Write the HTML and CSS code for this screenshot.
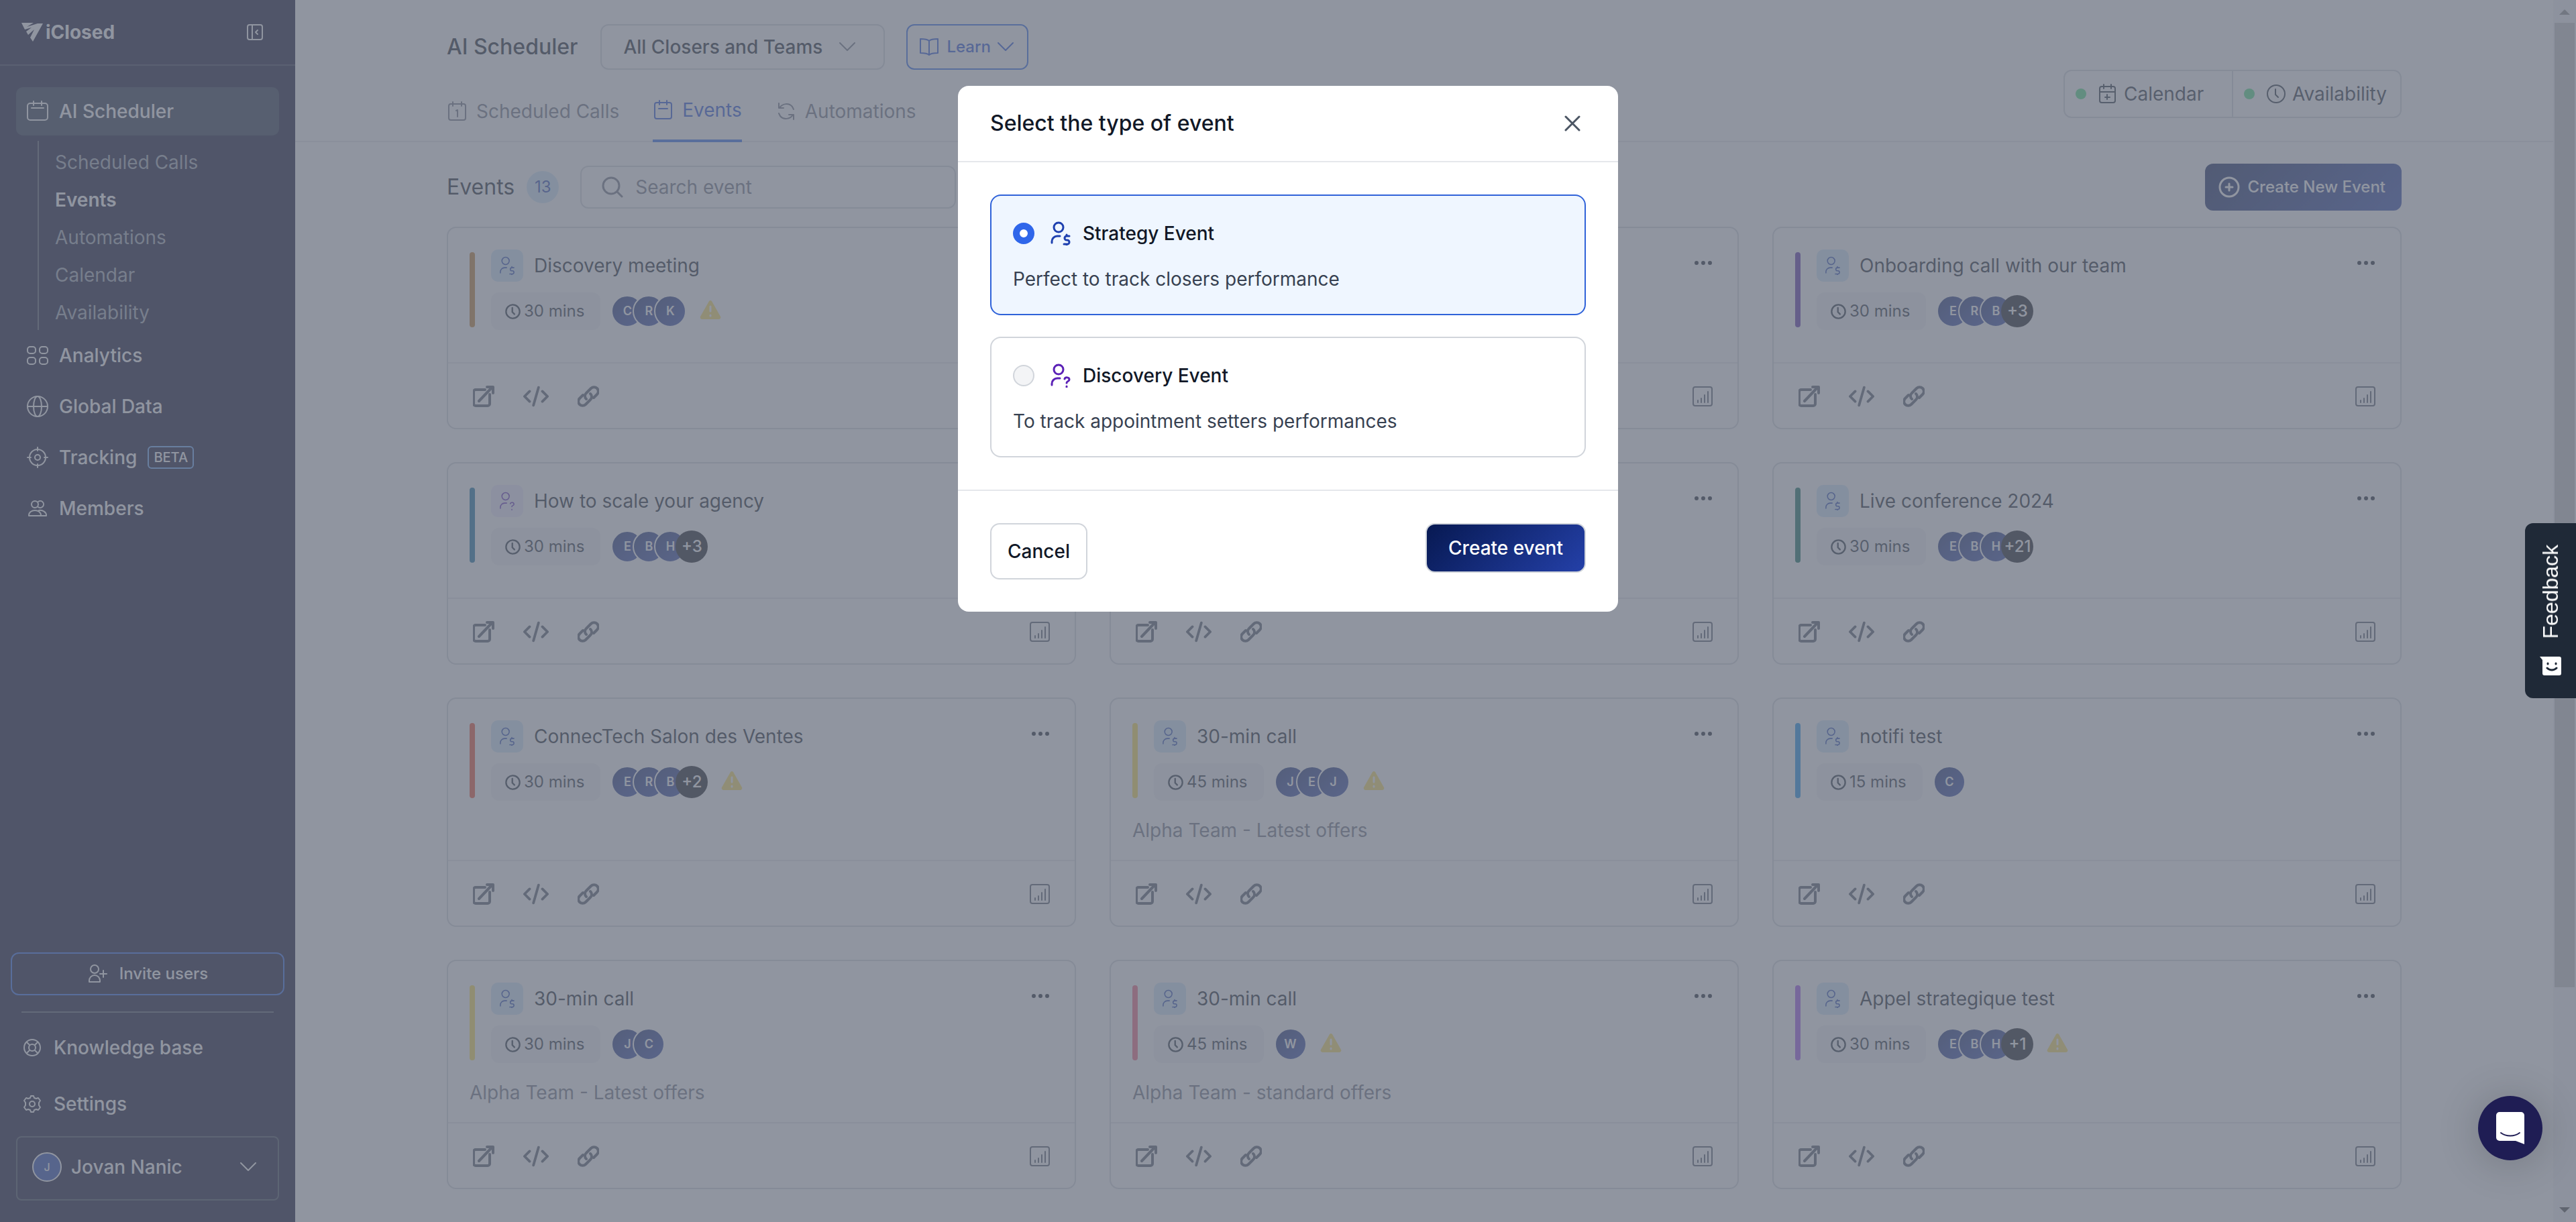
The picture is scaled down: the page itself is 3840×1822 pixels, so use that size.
FILE: index.html
```
<!DOCTYPE html>
<html lang="en">

<head>
    <meta charset="utf-8">
    <meta name="viewport" content="width=device-width, initial-scale=1">
    <title>iClosed - Events</title>
    <link rel="stylesheet" href="styles.css">
</head>

<body>
    <svg class="sprite" aria-hidden="true">
        <symbol id="i-calendar" viewBox="0 0 32 32">
            <rect x="1" y="4" width="30" height="25" rx="4" />
            <path d="M10 1v6M22 1v6M7 11h18" />
        </symbol>
        <symbol id="i-grid" viewBox="0 0 32 32">
            <rect x="1" y="3" width="12" height="10" rx="4" />
            <rect x="19" y="3" width="12" height="10" rx="4" />
            <rect x="1" y="19" width="12" height="10" rx="4" />
            <rect x="19" y="19" width="12" height="10" rx="4" />
        </symbol>
        <symbol id="i-globe" viewBox="0 0 32 32">
            <circle cx="16" cy="16" r="15" />
            <ellipse cx="16" cy="16" rx="6" ry="15" />
            <path d="M1 16h30" />
        </symbol>
        <symbol id="i-target" viewBox="0 0 32 32">
            <circle cx="16" cy="16" r="12" />
            <circle cx="16" cy="16" r="4" />
            <path d="M16 1v5M16 26v5M1 16h5M26 16h5" />
        </symbol>
        <symbol id="i-members" viewBox="0 0 32 32">
            <circle cx="12" cy="10" r="5" />
            <path d="M17 6a5 5 0 1 1 0 8" />
            <path d="M3 27v-1c0-4 4-7 9-7s9 3 9 7v1zM18 19c6-1 11 3 11 7v1h-8" />
        </symbol>
        <symbol id="i-invite" viewBox="0 0 32 32">
            <circle cx="11" cy="9" r="6" />
            <path d="M3 28v-2a8 8 0 0 1 16 0v2zM24 11v10M19 16h10" />
        </symbol>
        <symbol id="i-help" viewBox="0 0 32 32">
            <circle cx="16" cy="16" r="12" />
            <circle cx="16" cy="16" r="5" />
            <path d="M8 8l4 4M24 8l-4 4M8 24l4-4M24 24l-4-4" />
        </symbol>
        <symbol id="i-gear" viewBox="0 0 32 32">
            <circle cx="16" cy="16" r="4" />
            <path d="M14 4h4l1 3 3 1 3-1 3 4-2 3v4l2 3-3 4-3-1-3 1-1 3h-4l-1-3-3-1-3 1-3-4 2-3v-4l-2-3 3-4 3 1 3-1z" />
        </symbol>
        <symbol id="i-collapse" viewBox="0 0 24 24">
            <rect x="1" y="1" width="22" height="22" rx="3" />
            <path d="M8 1v22M16 9l-3 3 3 3" />
        </symbol>
        <symbol id="i-chevron" viewBox="0 0 24 14">
            <path d="M1 1l11 11L23 1" />
        </symbol>
        <symbol id="i-book" viewBox="0 0 32 28">
            <path d="M16 5c-3-3-8-3-13-3v21c5 0 10 0 13 3 3-3 8-3 13-3V2c-5 0-10 0-13 3zM16 5v21" />
        </symbol>
        <symbol id="i-day" viewBox="0 0 32 32">
            <rect x="3" y="5" width="25" height="24" rx="3" />
            <path d="M9 2v6M22 2v6M14 15l2-1v10" />
        </symbol>
        <symbol id="i-event" viewBox="0 0 32 32">
            <rect x="3" y="5" width="25" height="24" rx="3" />
            <path d="M10 2v6M21 2v6M9 14h13" />
        </symbol>
        <symbol id="i-sync" viewBox="0 0 32 32">
            <path d="M5 4v7h7M6 11c4-7 14-8 19-2l2 4M27 28v-7h-7M26 21c-4 7-14 8-19 2l-2-4" />
        </symbol>
        <symbol id="i-caladd" viewBox="0 0 32 32">
            <rect x="4" y="5" width="23" height="24" rx="3" />
            <path d="M10 2v6M21 2v6M4 13h23M15 17v7M12 21h7" />
        </symbol>
        <symbol id="i-clock" viewBox="0 0 32 32">
            <circle cx="16" cy="16" r="13" />
            <path d="M15 9v8l4 4" />
        </symbol>
        <symbol id="i-search" viewBox="0 0 32 32">
            <circle cx="14" cy="14" r="12" />
            <path d="M23 23l7 7" />
        </symbol>
        <symbol id="i-plus" viewBox="0 0 32 32">
            <circle cx="16" cy="16" r="14" />
            <path d="M16 11v10M11 16h10" />
        </symbol>
        <symbol id="i-strategy" viewBox="0 0 30 36">
            <circle cx="12" cy="9" r="7" />
            <path d="M2 32v-2a8 8 0 0 1 8-8h4M28 22h-4a3 3 0 0 0 0 6h1a3 3 0 0 1 0 6h-5M24 20v2M24 34v2" />
        </symbol>
        <symbol id="i-discovery" viewBox="0 0 30 36">
            <circle cx="12" cy="9" r="7" />
            <path d="M2 32v-2a8 8 0 0 1 8-8h4M21 23c1-3 7-3 7 1 0 3-4 2-4 5M24 34v1" />
        </symbol>
        <symbol id="i-open" viewBox="0 0 32 32">
            <path d="M18 6H4a3 3 0 0 0-3 3v18a3 3 0 0 0 3 3h18a3 3 0 0 0 3-3V13M9 23L28 3M21 2h9v9" />
        </symbol>
        <symbol id="i-code" viewBox="0 0 40 32">
            <path d="M10 8l-8 8 8 8M30 8l8 8-8 8M24 2l-8 28" />
        </symbol>
        <symbol id="i-link" viewBox="0 0 32 32">
            <path d="M13 20a6 6 0 0 1 0-9l7-7a6 6 0 0 1 9 9l-5 5M19 12a6 6 0 0 1 0 9l-7 7a6 6 0 0 1-9-9l5-5" />
        </symbol>
        <symbol id="i-chart" viewBox="0 0 30 30">
            <rect x="1" y="1" width="28" height="28" rx="3" />
            <path d="M8 21v3M13 18v6M18 13v11M23 8v16" />
        </symbol>
        <symbol id="i-warning" viewBox="0 0 32 30">
            <path class="tri" d="M14 2a3 3 0 0 1 4 0l13 23a3 3 0 0 1-2 4H3a3 3 0 0 1-2-4z" />
            <path class="mark" d="M16 10v7M16 23v1" />
        </symbol>
        <symbol id="i-dots" viewBox="0 0 26 6">
            <circle cx="3" cy="3" r="2" />
            <circle cx="13" cy="3" r="2" />
            <circle cx="23" cy="3" r="2" />
        </symbol>
    </svg>

    <div class="app">
        <aside class="sidebar">
            <div class="brand">
                <div class="logo">
                    <svg width="32" height="28" viewBox="0 0 32 28">
                        <path fill="currentColor" d="M0 0h18L8 6l16-5h8L17 28l-4-6 6-12-9 8-3-5 8-6-10 3z" />
                    </svg>
                    <span>iClosed</span>
                </div>
                <button class="plain" aria-label="Collapse menu"><svg class="icon collapse"><use href="#i-collapse" /></svg></button>
            </div>
            <nav class="nav">
                <a class="nav-item active" href="#"><svg class="icon"><use href="#i-calendar" /></svg>AI Scheduler</a>
                <div class="subnav">
                    <a href="#">Scheduled Calls</a>
                    <a class="current" href="#">Events</a>
                    <a href="#">Automations</a>
                    <a href="#">Calendar</a>
                    <a href="#">Availability</a>
                </div>
                <a class="nav-item" href="#"><svg class="icon"><use href="#i-grid" /></svg>Analytics</a>
                <a class="nav-item" href="#"><svg class="icon"><use href="#i-globe" /></svg>Global Data</a>
                <a class="nav-item" href="#"><svg class="icon"><use href="#i-target" /></svg>Tracking <span class="beta">BETA</span></a>
                <a class="nav-item" href="#"><svg class="icon"><use href="#i-members" /></svg>Members</a>
            </nav>
            <div class="side-bottom">
                <button class="invite"><svg class="icon"><use href="#i-invite" /></svg>Invite users</button>
                <hr>
                <a class="side-link" href="#"><svg class="icon"><use href="#i-help" /></svg>Knowledge base</a>
                <a class="side-link" href="#"><svg class="icon"><use href="#i-gear" /></svg>Settings</a>
                <button class="user">
                    <span class="user-pic">J</span>
                    <span class="user-name">Jovan Nanic</span>
                    <svg class="icon chevron"><use href="#i-chevron" /></svg>
                </button>
            </div>
        </aside>

        <main class="main">
            <header class="header">
                <div>
                    <div class="header-row">
                        <h1>AI Scheduler</h1>
                        <div class="select-wrap">
                            <select aria-label="Closers and teams">
                                <option>All Closers and Teams</option>
                            </select>
                            <svg class="icon chevron"><use href="#i-chevron" /></svg>
                        </div>
                        <button class="learn"><svg class="icon book"><use href="#i-book" /></svg>Learn<svg class="icon chevron"><use href="#i-chevron" /></svg></button>
                    </div>
                    <nav class="tabs">
                        <a href="#"><svg class="icon"><use href="#i-day" /></svg>Scheduled Calls</a>
                        <a class="active" href="#"><svg class="icon"><use href="#i-event" /></svg>Events</a>
                        <a href="#"><svg class="icon"><use href="#i-sync" /></svg>Automations</a>
                    </nav>
                </div>
                <div class="status">
                    <button><i class="dot"></i><svg class="icon"><use href="#i-caladd" /></svg>Calendar</button>
                    <button><i class="dot"></i><svg class="icon"><use href="#i-clock" /></svg>Availability</button>
                </div>
            </header>

            <section class="content">
                <div class="toolbar">
                    <h2>Events</h2>
                    <span class="count">13</span>
                    <label class="search">
                        <svg class="icon"><use href="#i-search" /></svg>
                        <input type="text" placeholder="Search event" aria-label="Search event">
                    </label>
                    <button class="create-new"><svg class="icon"><use href="#i-plus" /></svg>Create New Event</button>
                </div>
                <div class="cards" id="cards"></div>
            </section>
        </main>

        <div class="scrollbar">
            <svg width="16" height="8" viewBox="0 0 16 8"><path d="M8 0l8 8H0z" /></svg>
            <div class="track"><div class="thumb"></div></div>
            <svg class="down" width="16" height="8" viewBox="0 0 16 8"><path d="M8 8L0 0h16z" /></svg>
        </div>
    </div>

    <div class="overlay">
        <form class="modal" role="dialog" aria-labelledby="modalTitle" onsubmit="return false">
            <div class="modal-head">
                <h2 id="modalTitle">Select the type of event</h2>
                <button type="button" class="plain" aria-label="Close">
                    <svg width="24" height="24" viewBox="0 0 24 24"><path d="M2 2l20 20M22 2L2 22" /></svg>
                </button>
            </div>
            <div class="modal-body">
                <label class="option">
                    <span class="option-row">
                        <input type="radio" name="eventType" checked>
                        <svg class="icon type strategy"><use href="#i-strategy" /></svg>
                        <b>Strategy Event</b>
                    </span>
                    <span class="option-text">Perfect to track closers performance</span>
                </label>
                <label class="option">
                    <span class="option-row">
                        <input type="radio" name="eventType">
                        <svg class="icon type discovery"><use href="#i-discovery" /></svg>
                        <b>Discovery Event</b>
                    </span>
                    <span class="option-text">To track appointment setters performances</span>
                </label>
            </div>
            <div class="modal-foot">
                <button type="button" class="cancel">Cancel</button>
                <button type="submit" class="create">Create event</button>
            </div>
        </form>
    </div>

    <button class="feedback">
        <svg width="32" height="28" viewBox="0 0 32 28">
            <path fill="#fff" d="M0 0h29a3 3 0 0 1 3 3v22a3 3 0 0 1-3 3H7a3 3 0 0 1-3-3V5z" />
            <path fill="none" stroke="#1f2937" stroke-width="3" stroke-linecap="round" d="M12 10v1M24 10v1M11 17c4 4 10 4 14 0" />
        </svg>
        <span>Feedback</span>
    </button>

    <button class="chat" aria-label="Open chat">
        <svg width="42" height="48" viewBox="0 0 42 48">
            <path fill="#fff" d="M5 0h32a5 5 0 0 1 5 5v43l-13-5H5a5 5 0 0 1-5-5V5a5 5 0 0 1 5-5z" />
            <path fill="none" stroke="#1f1d54" stroke-width="2" stroke-linecap="round" d="M7 31c8 6 20 6 28 0" />
        </svg>
    </button>

    <script src="script.js"></script>
</body>

</html>
```
FILE: styles.css
```
* {
    box-sizing: border-box;
}

body {
    margin: 0;
    font-family: Inter, "Liberation Sans", sans-serif;
    font-size: 28px;
    line-height: 40px;
    color: #111827;
    background-color: white;
}

button,
select,
input {
    font: inherit;
    color: inherit;
    margin: 0;
}

button {
    cursor: pointer;
}

a {
    color: inherit;
    text-decoration: none;
}

h1,
h2 {
    margin: 0;
    font-size: 32px;
    font-weight: 500;
}

.sprite {
    display: none;
}

.icon {
    flex: none;
    width: 32px;
    height: 32px;
    fill: none;
    stroke: currentColor;
    stroke-width: 2;
    stroke-linecap: round;
    stroke-linejoin: round;
}

.chevron {
    width: 24px;
    height: 14px;
}

.plain {
    display: flex;
    padding: 0;
    border: none;
    background: none;
}

.app {
    display: flex;
    height: 100vh;
    overflow: hidden;
}

/* Sidebar */
.sidebar {
    display: flex;
    flex-direction: column;
    flex: none;
    width: 440px;
    background-color: #000024;
    color: white;
    font-weight: 500;
}

.brand {
    display: flex;
    align-items: center;
    justify-content: space-between;
    height: 98px;
    padding: 0 48px 0 32px;
    border-bottom: 2px solid #2b2f4a;
}

.logo {
    display: flex;
    align-items: center;
    gap: 4px;
    font-weight: 700;
}

.collapse {
    width: 24px;
    height: 24px;
}

.nav {
    display: flex;
    flex-direction: column;
    gap: 4px;
    padding: 32px 24px;
}

.nav-item {
    display: flex;
    align-items: center;
    gap: 16px;
    height: 72px;
    padding: 0 16px;
    border-radius: 10px;
}

.nav-item.active {
    background-color: #1f2942;
}

.subnav {
    display: flex;
    flex-direction: column;
    gap: 4px;
    margin: 4px 0 -2px 32px;
    padding: 6px 0 0 24px;
    border-left: 2px solid #4b5563;
    color: #9ca3af;
    font-weight: 400;
}

.subnav a {
    line-height: 52px;
}

.subnav .current {
    color: white;
    font-weight: 600;
}

.beta {
    padding: 0 7px;
    border: 2px solid #60a5fa;
    border-radius: 6px;
    font-size: 20px;
    line-height: 30px;
}

.side-bottom {
    display: flex;
    flex-direction: column;
    margin-top: auto;
    padding: 0 16px 32px;
}

.invite {
    display: flex;
    align-items: center;
    justify-content: center;
    gap: 16px;
    height: 64px;
    border: 2px solid #2563eb;
    border-radius: 12px;
    background: none;
    font-size: 24px;
}

.side-bottom hr {
    width: 376px;
    margin: 24px 0 10px 16px;
    border: none;
    border-top: 2px solid #4b5563;
}

.side-link {
    display: flex;
    align-items: center;
    gap: 16px;
    padding-left: 16px;
    line-height: 84px;
}

.user {
    display: flex;
    align-items: center;
    gap: 14px;
    height: 96px;
    margin: 6px 8px 0;
    padding: 0 32px 4px 22px;
    border: 2px solid #374151;
    border-radius: 8px;
    background: none;
    text-align: left;
}

.user-pic {
    width: 44px;
    height: 44px;
    border: 2px solid white;
    border-radius: 50%;
    background-color: #1e40af;
    font-size: 16px;
    line-height: 40px;
    text-align: center;
}

.user-name {
    flex: 1;
}

/* Header */
.main {
    flex: 1;
    min-width: 0;
}

.header {
    display: flex;
    justify-content: space-between;
    align-items: flex-start;
    padding: 36px 226px 0;
    border-bottom: 2px solid #e5e7eb;
}

.header-row {
    display: flex;
    align-items: center;
    gap: 32px;
}

.header-row h1 {
    margin-right: 2px;
}

.select-wrap {
    position: relative;
    width: 424px;
}

.select-wrap select {
    appearance: none;
    width: 100%;
    height: 68px;
    padding: 0 32px;
    border: 2px solid #d1d5db;
    border-radius: 12px;
    background: none;
    font-weight: 500;
}

.select-wrap .chevron {
    position: absolute;
    right: 44px;
    top: 27px;
    color: #6b7280;
}

.learn {
    display: flex;
    align-items: center;
    gap: 10px;
    height: 68px;
    padding: 0 20px 0 16px;
    border: 2px solid #2563eb;
    border-radius: 12px;
    background: none;
    color: #1d4ed8;
    font-size: 24px;
    font-weight: 500;
}

.book {
    height: 28px;
}

.tabs {
    display: flex;
    gap: 50px;
    height: 108px;
    margin-bottom: -2px;
    padding-top: 16px;
    color: #6b7280;
}

.tabs a {
    display: flex;
    align-items: center;
    gap: 12px;
}

.tabs .active {
    border-bottom: 4px solid #2563eb;
    color: #1d4ed8;
}

.status {
    display: flex;
    width: 504px;
    height: 72px;
    margin-top: 68px;
    border: 2px solid #d1d5db;
    border-radius: 12px;
    color: #1f2937;
}

.status button {
    display: flex;
    flex: 1;
    align-items: center;
    gap: 8px;
    padding: 0 16px;
    border: none;
    background: none;
    white-space: nowrap;
}

.status button + button {
    border-left: 2px solid #d1d5db;
}

.dot {
    width: 16px;
    height: 16px;
    margin-right: 8px;
    border-radius: 50%;
    background-color: #4ade80;
}

/* Events */
.content {
    padding: 32px 226px;
}

.toolbar {
    display: flex;
    align-items: center;
    height: 70px;
    margin-bottom: 24px;
}

.toolbar h2 {
    font-weight: 400;
}

.count {
    width: 48px;
    margin: 0 32px 0 18px;
    border-radius: 50%;
    background-color: #cfe8fc;
    color: #1e40af;
    font-size: 24px;
    line-height: 48px;
    text-align: center;
}

.search {
    display: flex;
    align-items: center;
    gap: 18px;
    width: 560px;
    height: 64px;
    padding: 0 30px;
    border: 2px solid #d1d5db;
    border-radius: 12px;
    color: #6b7280;
}

.search .icon {
    stroke-width: 3;
}

.search input {
    flex: 1;
    min-width: 0;
    padding: 0;
    border: none;
    outline: none;
    background: none;
}

.search input::placeholder {
    color: #6b7280;
}

.create-new {
    display: flex;
    align-items: center;
    gap: 12px;
    height: 70px;
    margin-left: auto;
    padding: 0 24px 0 20px;
    border: none;
    border-radius: 12px;
    background: linear-gradient(135deg, #071952, #2440a8);
    color: white;
    font-size: 24px;
    font-weight: 500;
}

.create-new .icon {
    stroke-width: 3;
}

.cards {
    display: grid;
    grid-template-columns: repeat(3, 1fr);
    gap: 49px 50px;
}

.card {
    display: flex;
    flex-direction: column;
    border: 2px solid #d1d5db;
    border-radius: 14px;
}

.card-body {
    flex: 1;
    min-height: 200px;
    padding: 32px 32px 24px;
}

.card-top {
    display: flex;
    align-items: center;
}

.bar {
    width: 8px;
    height: 112px;
    margin-right: 24px;
    border-radius: 4px;
}

.card-info {
    flex: 1;
}

.card-title,
.card-meta {
    display: flex;
    align-items: center;
    gap: 16px;
}

.card-title {
    margin-bottom: 16px;
}

.badge {
    display: flex;
    align-items: center;
    justify-content: center;
    width: 48px;
    height: 48px;
    border-radius: 10px;
}

.badge .icon {
    width: 24px;
    height: 28px;
}

.badge.strategy {
    background-color: #cfe8fc;
}

.badge.discovery {
    background-color: #ede9fe;
}

.strategy {
    color: #1e40af;
}

.discovery {
    color: #5b21b6;
}

.duration {
    display: flex;
    align-items: center;
    gap: 4px;
    height: 56px;
    padding: 0 24px 0 20px;
    border-radius: 12px;
    background-color: #f3f4f6;
    color: #1f2937;
    font-size: 24px;
}

.duration .icon {
    width: 25px;
    height: 25px;
    stroke-width: 3;
}

.people {
    display: flex;
    margin-right: 4px;
}

.person {
    width: 48px;
    height: 48px;
    border: 2px solid white;
    border-radius: 50%;
    background: linear-gradient(135deg, #12266b, #2a43a8);
    color: white;
    font-size: 18px;
    font-weight: 600;
    line-height: 44px;
    text-align: center;
}

.person + .person {
    margin-left: -16px;
}

.person.more {
    border: none;
    background: #0b0d14;
    font-size: 24px;
    font-weight: 500;
    line-height: 48px;
}

.warning {
    width: 32px;
    height: 30px;
    margin-bottom: 4px;
    stroke-width: 3;
}

.tri {
    fill: #fde058;
    stroke: none;
}

.mark {
    stroke: white;
}

.more-menu {
    align-self: flex-start;
    padding: 17px 6px;
}

.more-menu .icon {
    width: 26px;
    height: 6px;
    fill: currentColor;
}

.team {
    margin: 24px 0 0;
    color: #6b7280;
}

.card-foot {
    display: flex;
    align-items: center;
    gap: 43px;
    height: 98px;
    padding: 2px 37px 0;
    border-top: 2px solid #e5e7eb;
    color: #4b5563;
}

.card-foot .icon {
    stroke-width: 4;
}

.card-foot .code {
    width: 38px;
}

.card-foot .plain:last-child {
    margin-left: auto;
}

.card-foot .chart {
    width: 30px;
    height: 30px;
    stroke-width: 2;
}

/* Page scrollbar */
.scrollbar {
    display: flex;
    flex-direction: column;
    align-items: center;
    flex: none;
    gap: 12px;
    width: 34px;
    padding: 14px 0;
    background-color: #f4f4f5;
    fill: #898989;
}

.scrollbar .down {
    fill: #404040;
}

.track {
    flex: 1;
    width: 30px;
}

.thumb {
    height: 82%;
    background-color: #c1c1c1;
}

/* Modal */
.overlay {
    position: fixed;
    inset: 0;
    display: flex;
    align-items: flex-start;
    justify-content: center;
    padding-top: 128px;
    background-color: rgba(107, 114, 128, 0.75);
}

.modal {
    width: 984px;
    border-radius: 16px;
    background-color: white;
}

.modal-head {
    display: flex;
    align-items: center;
    justify-content: space-between;
    height: 114px;
    padding: 0 56px 0 48px;
    border-bottom: 2px solid #e5e7eb;
}

.modal-head svg {
    fill: none;
    stroke: #4b5563;
    stroke-width: 3;
    stroke-linecap: round;
}

.modal-body {
    display: flex;
    flex-direction: column;
    gap: 32px;
    padding: 48px;
}

.option {
    display: flex;
    flex-direction: column;
    gap: 24px;
    padding: 32px;
    border: 2px solid #d1d5db;
    border-radius: 16px;
    cursor: pointer;
}

.option:has(:checked) {
    border-color: #2f62d9;
    background-color: #eff6ff;
}

.option-row {
    display: flex;
    align-items: center;
    height: 48px;
}

.option b {
    font-weight: 500;
}

.option input {
    appearance: none;
    width: 32px;
    height: 32px;
    margin-right: 24px;
    border: 2px solid #d1d5db;
    border-radius: 50%;
    background-color: #f3f4f6;
}

.option input:checked {
    border: 10px solid #2f66ea;
    background-color: white;
}

.type {
    width: 30px;
    height: 36px;
    margin-right: 18px;
    stroke-width: 3;
}

.option-text {
    color: #374151;
}

.modal-foot {
    display: flex;
    align-items: flex-start;
    justify-content: space-between;
    padding: 48px;
    border-top: 2px solid #e5e7eb;
}

.modal-foot button {
    border: 2px solid #d1d5db;
    border-radius: 14px;
    background-color: white;
    font-weight: 500;
}

.modal-foot .cancel {
    height: 84px;
    padding: 0 24px;
}

.modal-foot .create {
    height: 74px;
    padding: 0 32px;
    background: linear-gradient(135deg, #071952, #2440a8);
    color: white;
}

/* Widgets on the right edge */
.feedback {
    position: fixed;
    right: 0;
    top: 780px;
    display: flex;
    flex-direction: column-reverse;
    align-items: center;
    gap: 26px;
    width: 76px;
    padding: 32px 0 34px;
    border: none;
    border-radius: 12px 0 0 12px;
    background-color: #1f2937;
    color: white;
    font-family: "Liberation Sans", sans-serif;
    font-size: 32px;
}

.feedback span {
    writing-mode: vertical-rl;
    transform: rotate(180deg);
}

.chat {
    position: fixed;
    right: 50px;
    bottom: 92px;
    display: flex;
    align-items: center;
    justify-content: center;
    width: 96px;
    height: 96px;
    padding: 0;
    border: none;
    border-radius: 50%;
    background-color: #1f1d54;
    box-shadow: 0 4px 64px rgba(0, 0, 0, 0.2);
}
```
FILE: script.js
```
var events = [
    { title: "Discovery meeting", color: "#c07e28", mins: 30, people: ["C", "R", "K"], warn: true },
    { title: "", color: "#0e7490", mins: 30, people: [] },
    { title: "Onboarding call with our team", color: "#542aa8", mins: 30, people: ["E", "R", "B"], more: 3 },
    { title: "How to scale your agency", color: "#0e6c9e", mins: 30, people: ["E", "B", "H"], more: 3, type: "discovery" },
    { title: "", color: "#0e7490", mins: 30, people: [] },
    { title: "Live conference 2024", color: "#066a5a", mins: 30, people: ["E", "B", "H"], more: 21 },
    { title: "ConnecTech Salon des Ventes", color: "#f04a2a", mins: 30, people: ["E", "R", "B"], more: 2, warn: true },
    { title: "30-min call", color: "#fde047", mins: 45, people: ["J", "E", "J"], warn: true, team: "Alpha Team - Latest offers" },
    { title: "notifi test", color: "#0e8ce9", mins: 15, people: ["C"] },
    { title: "30-min call", color: "#fde047", mins: 30, people: ["J", "C"], team: "Alpha Team - Latest offers" },
    { title: "30-min call", color: "#f4607e", mins: 45, people: ["W"], warn: true, team: "Alpha Team - standard offers" },
    { title: "Appel strategique test", color: "#9b4ceb", mins: 30, people: ["E", "B", "H"], more: 1, warn: true }
];

function icon(name, cls) {
    return `<svg class="icon ${cls || ""}"><use href="#i-${name}" /></svg>`;
}

function card(e) {
    var type = e.type || "strategy";
    var people = e.people.map(p => `<span class="person">${p}</span>`).join("");
    if (e.more) people += `<span class="person more">+${e.more}</span>`;

    return `<article class="card">
        <div class="card-body">
            <div class="card-top">
                <div class="bar" style="background-color: ${e.color}"></div>
                <div class="card-info">
                    <div class="card-title"><span class="badge ${type}">${icon(type)}</span>${e.title}</div>
                    <div class="card-meta">
                        <span class="duration">${icon("clock")}${e.mins} mins</span>
                        <span class="people">${people}</span>
                        ${e.warn ? icon("warning", "warning") : ""}
                    </div>
                </div>
                <button class="plain more-menu" aria-label="More">${icon("dots")}</button>
            </div>
            ${e.team ? `<p class="team">${e.team}</p>` : ""}
        </div>
        <div class="card-foot">
            <button class="plain" aria-label="Open">${icon("open")}</button>
            <button class="plain" aria-label="Embed">${icon("code", "code")}</button>
            <button class="plain" aria-label="Copy link">${icon("link")}</button>
            <button class="plain" aria-label="Statistics">${icon("chart", "chart")}</button>
        </div>
    </article>`;
}

document.getElementById("cards").innerHTML = events.map(card).join("");
```
